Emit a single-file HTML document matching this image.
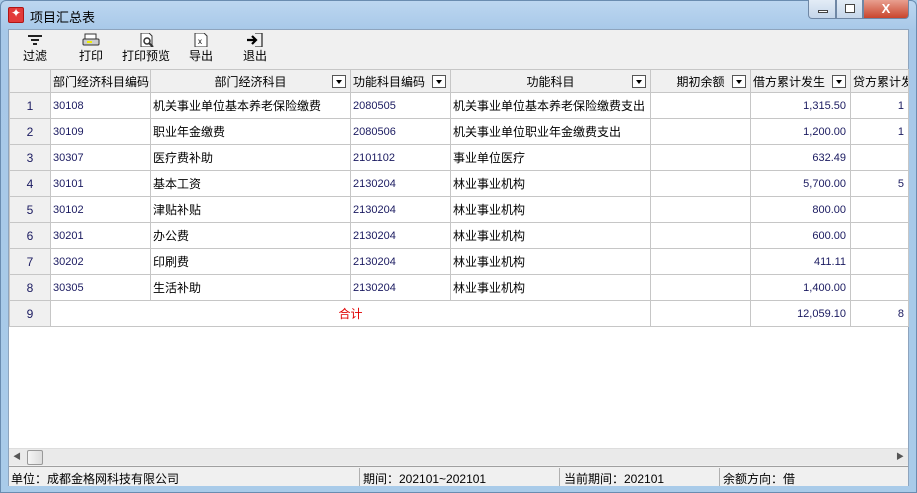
<!DOCTYPE html><html><head><meta charset="utf-8"><style>
*{margin:0;padding:0;box-sizing:border-box}
body{width:917px;height:493px;overflow:hidden;font-family:"Liberation Sans","Noto Sans CJK SC",sans-serif;font-size:12px;background:#a9cbe9;position:relative}
.frame{position:absolute;left:0;top:0;width:917px;height:493px;border:1px solid #6a8cb0;border-radius:6px 6px 0 0;background:linear-gradient(#bcd6f0,#a7c8e8 30px,#a9cbe9)}
.title{position:absolute;left:30px;top:7px;font-size:13px;color:#000}
.ico{position:absolute;left:8px;top:7px;width:16px;height:16px;background:#e23a3a;border-radius:2px;border:1px solid #b01515}
.ico:after{content:"✦";position:absolute;left:2px;top:-2px;color:#fff;font-size:12px}
.btns{position:absolute;left:808px;top:0;height:20px;width:101px;display:flex}
.b{height:19px;border:1px solid #6f87a5;border-top:none;background:linear-gradient(#e3ecf6,#c5d6ea);position:relative}
.inner{position:absolute;left:8px;top:29px;width:901px;height:457px;background:#f0f0f0;border:1px solid #8ea4bd}
.tool{position:absolute;top:0;height:40px;text-align:center;font-size:12px}
.tool svg{display:block;margin:3px auto 0}
table{position:absolute;left:0;top:39px;border-collapse:collapse;table-layout:fixed;background:#fff}
td{border:1px solid #c6c6c6;height:26px;padding:0 2px;white-space:nowrap;overflow:hidden;font-size:12px;color:#000}
tr.h td{height:23px;background:#f0f0f0;text-align:center;position:relative}
td.n{background:#f0f0f0;text-align:center;color:#1a1a60}
td.c{color:#1a1a60;font-size:11px}
td.r{text-align:right;padding-right:4px;color:#1a1a60;font-size:11px}
.dd{position:absolute;right:4px;top:5px;width:14px;height:13px;border:1px solid #555;background:#fff}
.dd:after{content:"";position:absolute;left:3px;top:4px;border:3.5px solid transparent;border-top:4px solid #000}
.grid{position:absolute;left:0;top:39px;width:899px;height:379px;background:#fff;overflow:hidden;border-top:1px solid #a0a0a0}
.sb{position:absolute;left:0;top:418px;width:899px;height:17px;background:#eaeaea;border-top:1px solid #ddd}
.status{position:absolute;left:0;top:436px;width:899px;height:20px;background:#f0f0f0;border-top:1px solid #a0a0a0;font-size:12px}
.status span{position:absolute;top:3px}
.sep{position:absolute;top:1px;width:1px;height:18px;background:#b0b0b0}
</style></head><body>
<div class="frame"></div>
<div class="ico"></div><div class="title">项目汇总表</div>
<div class="btns"><div class="b" style="width:28px;border-radius:0 0 0 4px"><div style="position:absolute;left:9px;top:10px;width:10px;height:3px;background:#fff;border:1px solid #444"></div></div><div class="b" style="width:27px"><div style="position:absolute;left:8px;top:4px;width:10px;height:9px;border:1px solid #444;background:#fff"></div></div><div class="b" style="width:46px;background:linear-gradient(#e8a090,#c9452d);border-radius:0 0 4px 0;color:#fff;text-align:center;font-weight:bold;font-size:13px;line-height:17px">X</div></div>
<div class="inner">
<div class="tool" style="left:10px;width:32px"><svg width="18" height="14"><path d="M2 3h14M5 7h8M7 11h4" stroke="#222" stroke-width="2"/></svg>过滤</div>
<div class="tool" style="left:66px;width:32px"><svg width="18" height="14"><rect x="3" y="1" width="11" height="5" fill="#fff" stroke="#333"/><rect x="1" y="6" width="16" height="6" rx="1" fill="#ccc" stroke="#333"/><rect x="5" y="8" width="5" height="2" fill="#ee0"/></svg>打印</div>
<div class="tool" style="left:111px;width:52px"><svg width="18" height="14"><path d="M4 0h8l3 3v11H4z" fill="#fff" stroke="#333"/><circle cx="10" cy="8" r="3" fill="none" stroke="#333" stroke-width="1.5"/><path d="M12 10l4 4" stroke="#333" stroke-width="2"/></svg>打印预览</div>
<div class="tool" style="left:176px;width:32px"><svg width="18" height="14"><path d="M3 0h9l3 3v11H3z" fill="#fff" stroke="#333"/><text x="6" y="11" font-size="8" font-family="Liberation Sans">x</text></svg>导出</div>
<div class="tool" style="left:230px;width:32px"><svg width="18" height="14"><path d="M9 0h7v14H9" fill="none" stroke="#333" stroke-width="1.3"/><path d="M1 7h8M6 3l4 4-4 4" fill="none" stroke="#000" stroke-width="2.2"/></svg>退出</div>
<div class="grid"></div>
<table style="width:899px">
<colgroup><col style="width:41px"><col style="width:100px"><col style="width:200px"><col style="width:100px"><col style="width:200px"><col style="width:100px"><col style="width:100px"><col style="width:58px"></colgroup>
<tr class="h"><td></td><td style="text-align:left">部门经济科目编码</td><td>部门经济科目<span class="dd"></span></td><td style="text-align:left">功能科目编码<span class="dd"></span></td><td>功能科目<span class="dd"></span></td><td>期初余额<span class="dd"></span></td><td style="text-align:left">借方累计发生<span class="dd"></span></td><td style="text-align:left">贷方累计发</td></tr>
<tr><td class="n">1</td><td class="c">30108</td><td>机关事业单位基本养老保险缴费</td><td class="c">2080505</td><td>机关事业单位基本养老保险缴费支出</td><td></td><td class="r">1,315.50</td><td class="r">1</td></tr>
<tr><td class="n">2</td><td class="c">30109</td><td>职业年金缴费</td><td class="c">2080506</td><td>机关事业单位职业年金缴费支出</td><td></td><td class="r">1,200.00</td><td class="r">1</td></tr>
<tr><td class="n">3</td><td class="c">30307</td><td>医疗费补助</td><td class="c">2101102</td><td>事业单位医疗</td><td></td><td class="r">632.49</td><td></td></tr>
<tr><td class="n">4</td><td class="c">30101</td><td>基本工资</td><td class="c">2130204</td><td>林业事业机构</td><td></td><td class="r">5,700.00</td><td class="r">5</td></tr>
<tr><td class="n">5</td><td class="c">30102</td><td>津贴补贴</td><td class="c">2130204</td><td>林业事业机构</td><td></td><td class="r">800.00</td><td></td></tr>
<tr><td class="n">6</td><td class="c">30201</td><td>办公费</td><td class="c">2130204</td><td>林业事业机构</td><td></td><td class="r">600.00</td><td></td></tr>
<tr><td class="n">7</td><td class="c">30202</td><td>印刷费</td><td class="c">2130204</td><td>林业事业机构</td><td></td><td class="r">411.11</td><td></td></tr>
<tr><td class="n">8</td><td class="c">30305</td><td>生活补助</td><td class="c">2130204</td><td>林业事业机构</td><td></td><td class="r">1,400.00</td><td></td></tr>
<tr><td class="n">9</td><td colspan="4" style="text-align:center;color:#e00000">合计</td><td></td><td class="r">12,059.10</td><td class="r">8</td></tr>
</table>
<div class="sb"><span style="position:absolute;left:4px;top:2px;font-size:8px;color:#555">◀</span><div style="position:absolute;left:18px;top:1px;width:16px;height:15px;border:1px solid #999;border-radius:2px;background:linear-gradient(90deg,#f5f5f5,#ddd)"></div><span style="position:absolute;right:4px;top:2px;font-size:8px;color:#555">▶</span></div>
<div class="status"><span style="left:2px">单位：成都金格网科技有限公司</span><div class="sep" style="left:350px"></div><span style="left:354px">期间：202101~202101</span><div class="sep" style="left:550px"></div><span style="left:555px">当前期间：202101</span><div class="sep" style="left:710px"></div><span style="left:714px">余额方向：借</span></div>
</div>
</body></html>
